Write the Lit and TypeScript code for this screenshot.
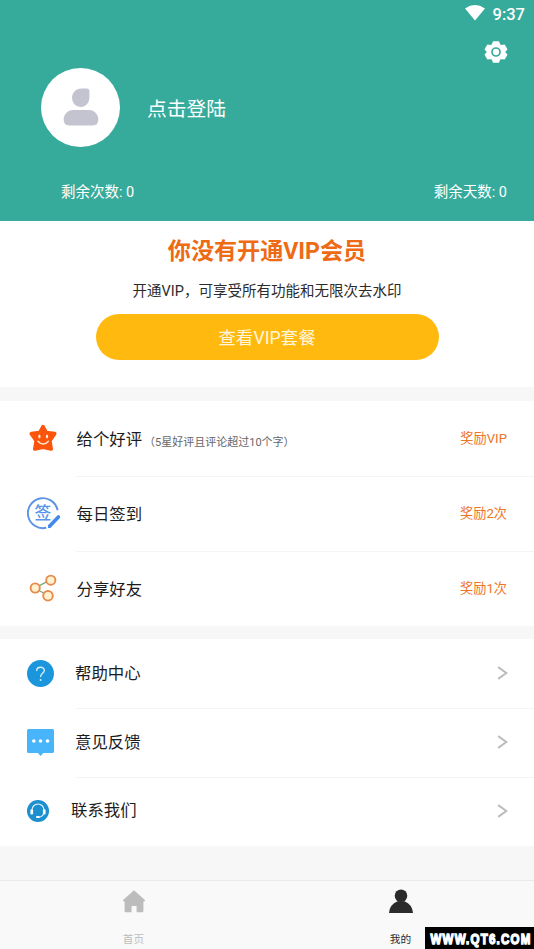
import { LitElement, html, css, svg, nothing } from "lit";
import { customElement } from "lit/decorators.js";

const star = svg`<svg width="28" height="28" viewBox="0 0 28 28">
  <path d="M14 2.6 L17.3 8.6 L25.7 9.6 L20.8 16.6 L22.2 25 L14 23.2 L5.8 25 L7.2 16.6 L2.3 9.6 L10.7 8.6 Z" fill="#fb540c" stroke="#fb540c" stroke-width="3.6" stroke-linejoin="round"/>
  <ellipse cx="10.4" cy="12.4" rx="1.1" ry="2" fill="#fff0dc"/><ellipse cx="18" cy="12.4" rx="1.1" ry="2" fill="#fff0dc"/>
  <path d="M9 17.2 Q14.2 23 19.4 17.2" fill="none" stroke="#ffe6cc" stroke-width="1.5" stroke-linecap="round"/></svg>`;

const sign = svg`<svg width="34" height="34" viewBox="0 0 34 34">
  <path d="M30.6 14.2 A15 15 0 1 0 19.2 31.8" fill="none" stroke="#5a93e8" stroke-width="1.9"/>
  <text x="15.8" y="22.6" text-anchor="middle" font-size="16.8" font-weight="500" font-family="Noto Sans CJK SC, sans-serif" fill="#5a93e8">签</text>
  <path d="M23 29.8 L31.4 21" stroke="#4388ee" stroke-width="3.6" stroke-linecap="round"/>
  <path d="M21.4 28.6 L24.4 31.4 L20.8 32.2 Z" fill="#4388ee"/></svg>`;

const share = svg`<svg width="28" height="28" viewBox="0 0 28 28">
  <path d="M9 12.3 L17.6 7.8 M9 16 L15 19.2" stroke="#7ca87c" stroke-width="1.3"/>
  <g fill="#fff3cf" stroke="#e88a4c" stroke-width="1.9"><circle cx="6.2" cy="14" r="4.6"/><circle cx="21.8" cy="6.2" r="4.6"/><circle cx="19" cy="21.8" r="4.8"/></g></svg>`;

const help = svg`<svg width="27" height="27" viewBox="0 0 26 26"><circle cx="13" cy="13" r="13" fill="#1b96dc"/>
  <path d="M9.4 10.2 C9.4 5.9 16.7 6 16.7 10 C16.7 12.7 13.1 12.9 13.1 16" fill="none" stroke="#d6f0ff" stroke-width="1.3" stroke-linecap="round"/><circle cx="13.1" cy="19.2" r=".95" fill="#d6f0ff"/></svg>`;

const feedback = svg`<svg width="27" height="27" viewBox="0 0 27 27"><path d="M1.5 0 H25.5 Q27 0 27 1.5 V22.5 Q27 24 25.5 24 H16.3 L13.6 27 L10.9 24 H1.5 Q0 24 0 22.5 V1.5 Q0 0 1.5 0Z" fill="#48b5fb"/>
  <g fill="#fff"><circle cx="6.8" cy="12" r="1.8"/><circle cx="13.5" cy="12" r="1.8"/><circle cx="20.5" cy="12" r="1.8"/></g></svg>`;

const contact = svg`<svg width="22" height="22" viewBox="0 0 22 22"><circle cx="11" cy="11" r="11" fill="#1b8fd0"/>
  <path d="M5 11 V10 A6 6 0 0 1 17 10 V12 Q16.5 16.6 12 17.2" fill="none" stroke="#e8f7ff" stroke-width="1.1"/>
  <rect x="3.4" y="9.2" width="2.7" height="5.2" rx="1.2" fill="#fff"/><rect x="15.9" y="9.2" width="2.7" height="5.2" rx="1.2" fill="#fff"/><rect x="9" y="16.1" width="3.8" height="1.9" rx=".9" fill="#fff"/></svg>`;

const chevron = svg`<svg width="11" height="14" viewBox="0 0 11 14"><path d="M1.2 1.1 L9.3 7 L1.2 12.9" fill="none" stroke="#bcbcbc" stroke-width="2"/></svg>`;

const rewards = [
  { icon: star, label: "给个好评", note: "（5星好评且评论超过10个字）", reward: "奖励VIP" },
  { icon: sign, label: "每日签到", note: "", reward: "奖励2次" },
  { icon: share, label: "分享好友", note: "", reward: "奖励1次" },
];

const links = [
  { icon: help, label: "帮助中心", cls: "" },
  { icon: feedback, label: "意见反馈", cls: "" },
  { icon: contact, label: "联系我们", cls: "narrow" },
];

@customElement("app-root")
export class AppRoot extends LitElement {
  static styles = css`
    :host { display: flex; flex-direction: column; position: relative; width: 100%; height: 949px; overflow: hidden; background: #f7f7f7; color: #1c1c1c; font-family: Roboto, "Noto Sans CJK SC", sans-serif; }
    * { box-sizing: border-box; }
    svg { display: block; flex: none; }
    .header { height: 221px; background: #36ab9b; color: #fff; flex: none; }
    .status { display: flex; justify-content: flex-end; align-items: center; gap: 8px; height: 28px; padding-right: 9px; font-size: 16.5px; line-height: 26px; font-weight: 500; }
    .status span { padding-top: 2px; }
    .status svg { margin-bottom: 2px; }
    .settings { display: flex; justify-content: flex-end; height: 40px; padding: 12px 26px 0 0; }
    .profile { display: flex; align-items: center; gap: 27px; height: 79px; padding-left: 41px; font-size: 19.8px; }
    .avatar { width: 79px; height: 79px; border-radius: 50%; background: #fff; display: grid; place-items: center; padding-bottom: 2px; }
    .counts { display: flex; justify-content: space-between; padding: 35px 27px 0 61px; font-size: 14.5px; line-height: 22px; }
    .vip { height: 166px; flex: none; background: #fff; display: flex; flex-direction: column; align-items: center; }
    .title { margin: 13px 0 0; font-size: 23.1px; line-height: 36px; font-weight: 700; color: #ee6a14; }
    .desc { margin: 11px 0 0; font-size: 14.5px; line-height: 22px; color: #2b2b2b; }
    .open { margin-top: 11px; width: 343px; height: 46px; border: 0; border-radius: 23px; background: #ffb90f; color: #fff6dc; font: 17.6px/46px Roboto, "Noto Sans CJK SC", sans-serif; padding: 1px 0 0; }
    .list { background: #fff; flex: none; }
    .rewards { margin-top: 14px; }
    .links { margin-top: 13px; }
    .row { display: flex; align-items: center; height: 75px; padding-left: 27px; }
    .links .row { height: 69px; }
    .icon { width: 49.5px; padding-bottom: 1px; }
    .rewards .icon.inset { padding-left: 2px; }
    .links .icon { width: 48px; }
    .links .icon.narrow { width: 44px; }
    .body { flex: 1; display: flex; align-items: center; height: 100%; padding: 1px 27px 0 0; }
    .rewards .label { padding-top: 1px; }
    .links .body { padding: 0 26px 0 0; }
    .links .narrow + .body .label { padding-bottom: 2px; }
    .line { height: 1px; margin: -1px 0 0 76px; background: #f4f4f4; position: relative; top: 1px; }
    .label { font-size: 16.4px; line-height: 24px; white-space: nowrap; }
    .note { font-size: 11px; line-height: 16px; color: #666; padding-top: 7px; margin-left: 2px; white-space: nowrap; }
    .reward { margin-left: auto; font-size: 13.2px; line-height: 20px; color: #ee7426; }
    .go { margin-left: auto; padding-bottom: 2px; }
    .tabs { margin-top: auto; height: 69px; flex: none; display: grid; grid-template-columns: 1fr 1fr; border-top: 1px solid #e9e9e9; background: #f9f9f9; }
    .tab { display: flex; flex-direction: column; align-items: center; justify-content: space-between; padding: 8px 0 1px; font-size: 10.7px; line-height: 16px; color: #bdbdbd; }
    .active { color: #2b2b2b; }
    .mark { position: absolute; right: 0; bottom: 0; width: 109px; height: 22px; background: #000; }
    .mark text { font-family: "Liberation Sans Narrow", "Liberation Sans", sans-serif; font-weight: 700; font-size: 8.6px; letter-spacing: .9px; fill: #fff; stroke: #fff; stroke-width: .8px; }
  `;

  render() {
    return html`
      <header class="header">
        <div class="status">
          <svg width="20" height="16" viewBox="0 0 20 16"><path d="M0 3.4 Q10 -3.4 20 3.4 L10 15.6Z" fill="#fff"/></svg>
          <span>9:37</span>
        </div>
        <div class="settings">
          <svg width="24" height="24" viewBox="0 0 24 24">
            <path d="M9.5 2 H14.5 L15.3 4.7 L17.5 5.9 L20.3 5.3 L22.6 9.3 L20.8 11.1 V12.9 L22.6 14.7 L20.3 18.7 L17.5 18.1 L15.3 19.3 L14.5 22 H9.5 L8.7 19.3 L6.5 18.1 L3.7 18.7 L1.4 14.7 L3.2 12.9 V11.1 L1.4 9.3 L3.7 5.3 L6.5 5.9 L8.7 4.7Z" fill="#fff" stroke="#fff" stroke-width="1.6" stroke-linejoin="round"/>
            <circle cx="12" cy="12" r="4" fill="none" stroke="#36ab9b" stroke-width="1.7"/></svg>
        </div>
        <div class="profile">
          <div class="avatar">
            <svg width="36" height="38" viewBox="0 0 36 38" fill="#c3c4d0"><path d="M18 0.5 H24 Q26.4 .5 26.4 3 V10 A8.7 9.3 0 1 1 18 .5Z"/><path d="M10 22 H26 Q33 22 35.3 30 Q36 37.5 29.5 37.5 H6.5 Q0 37.5 .7 30 Q3 22 10 22Z"/></svg>
          </div>
          <span>点击登陆</span>
        </div>
        <div class="counts"><span>剩余次数: 0</span><span>剩余天数: 0</span></div>
      </header>
      <section class="vip">
        <h1 class="title">你没有开通VIP会员</h1>
        <p class="desc">开通VIP，可享受所有功能和无限次去水印</p>
        <button class="open">查看VIP套餐</button>
      </section>
      <section class="list rewards">
        ${rewards.map((r, i) => html`
          <div class="row">
            <div class="icon ${i === 1 ? "" : "inset"}">${r.icon}</div>
            <div class="body"><span class="label">${r.label}</span>${r.note ? html`<span class="note">${r.note}</span>` : nothing}<span class="reward">${r.reward}</span></div>
          </div>
          ${i < 2 ? html`<div class="line"></div>` : nothing}`)}
      </section>
      <section class="list links">
        ${links.map((l, i) => html`
          <div class="row">
            <div class="icon ${l.cls}">${l.icon}</div>
            <div class="body"><span class="label">${l.label}</span><span class="go">${chevron}</span></div>
          </div>
          ${i < 2 ? html`<div class="line"></div>` : nothing}`)}
      </section>
      <nav class="tabs">
        <div class="tab">
          <svg width="24" height="24" viewBox="0 0 24 24" fill="#bcbcbc"><path d="M12 1.2 L23.2 11.2 L22.2 12.6 H21.4 V22 Q21.4 23.2 20.2 23.2 H14.6 V17 H9.6 V23.2 H3.8 Q2.6 23.2 2.6 22 V12.6 H1.8 L.8 11.2Z"/></svg>
          <span>首页</span>
        </div>
        <div class="tab active">
          <svg width="24" height="24" viewBox="0 0 24 24" fill="#2b2b2b"><circle cx="12" cy="6.8" r="6.3"/><path d="M0 24 Q.6 15.6 8.5 12.3 H15.5 Q23.4 15.6 24 24Z"/></svg>
          <span>我的</span>
        </div>
      </nav>
      <div class="mark"><svg width="109" height="22" viewBox="0 0 109 12.5" preserveAspectRatio="none"><text x="5.5" y="9.6" textLength="101" lengthAdjust="spacingAndGlyphs">WWW.QT6.COM</text></svg></div>
    `;
  }
}
